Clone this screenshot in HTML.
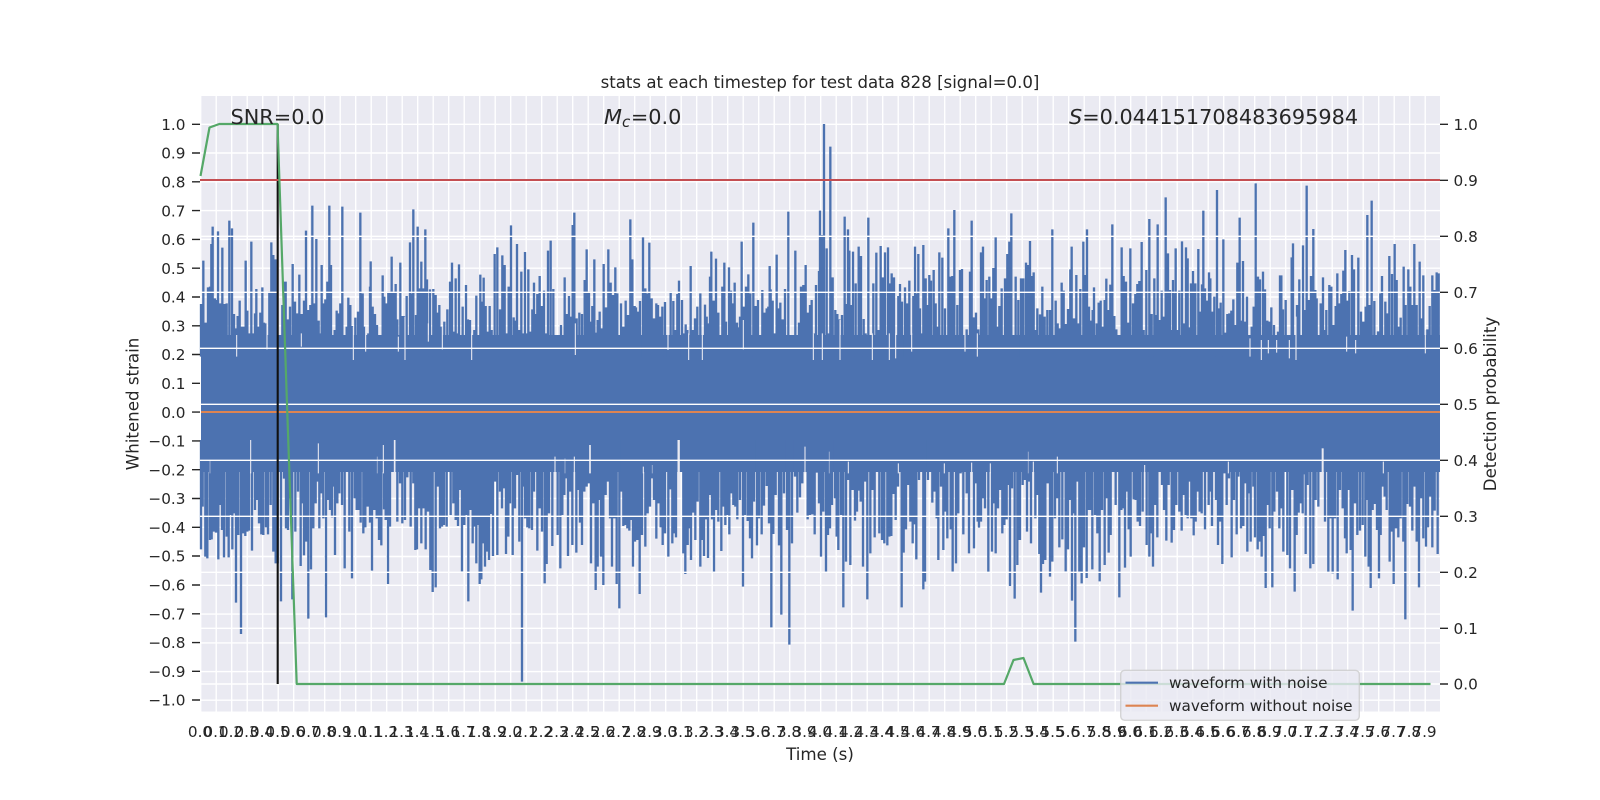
<!DOCTYPE html>
<html><head><meta charset="utf-8"><style>html,body{margin:0;padding:0;background:#fff}svg{display:block}text{font-family:"DejaVu Sans","Liberation Sans",sans-serif;fill:#262626}</style></head><body>
<svg width="1600" height="800" viewBox="0 0 1600 800" xmlns="http://www.w3.org/2000/svg">
<rect x="200" y="96" width="1240" height="615.5" fill="#EAEAF2"/>
<!-- vertical grid -->
<line x1="200" y1="403.75" x2="1440" y2="403.75" stroke="#fff" stroke-width="615.5" stroke-dasharray="1.4 14.1"/>
<!-- left horizontal grid -->
<path stroke="#fff" stroke-width="1.4" fill="none" d="M200 124.3H1440M200 153H1440M200 181.8H1440M200 210.6H1440M200 239.4H1440M200 268.2H1440M200 297H1440M200 325.8H1440M200 354.5H1440M200 383.3H1440M200 412.1H1440M200 440.9H1440M200 469.7H1440M200 498.5H1440M200 527.3H1440M200 556.5H1440M200 585.3H1440M200 614.1H1440M200 642.9H1440M200 671.6H1440M200 700.2H1440"/>
<!-- waveform body -->
<rect x="201" y="335" width="1239" height="137" fill="#4C72B0"/>
<g fill="none" stroke="#4C72B0" stroke-width="7">
<g transform="translate(200 190) scale(.33333)"><path d="M3 342V500M10 212V500M17 398V500M24 292V500M30 290V500M34 162V500M38 110V500M45 325V500M48 330V500M54 124V500M60 340V500M67 173V500M74 342V500M80 340V500M88 92V500M96 115V500M102 372V500M106 415V500M113 378V500M119 332V500M125 410V500M130 410V500M137 212V500M142 362V500M148 430V500M154 155V500M160 430V500M165 370V500M169 297V500M175 410V500M181 368V500M187 292V500M192 398V500M197 400V500M208 305V500M214 157V500M220 195V500M227 208V500M232 305V500M240 455V500M247 345V500M252 275V500M257 275V500M263 388V500M270 350V500M278 222V500M285 335V500M292 370V500M298 254V500M305 372V500M312 332V500M318 122V500M325 360V500M331 345V500M337 47V500M343 340V500M349 147V500M356 392V500M360 430V500M365 225V500M370 340V500M376 328V500M382 275V500M388 47V500M393 225V500M399 450V500M404 420V500M410 362V500M416 370V500M421 340V500M427 50V500M433 460V500M440 410V500M445 323V500M451 345V500M456 408V500M466 383V500M474 365V500M481 68V500M488 310V500M494 410V500M505 430V500M510 290V500M512 214V500M518 350V500M525 372V500M531 405V500M537 435V500M541 450V500M548 256V500M553 320V500M559 340V500M565 305V500M572 305V500M575 200V500M581 305V500M587 282V500M592 388V500M601 218V500M606 378V500M612 378V500M620 318V500M630 157V500M634 310V500M640 58V500M648 375V500M653 110V500M659 295V500M664 215V500M670 295V500M676 118V500M681 268V500M690 298V500M700 297V500M707 315V500M712 368V500M718 345V500M725 410V500M733 395V500M742 358V500M750 275V500M756 218V500M761 425V500M767 265V500M772 430V500M777 223V500M782 445V500M788 350V500M792 445V500M798 285V500M804 388V500M810 390V500M823 420V500M829 317V500M835 485V500M841 254V500M847 335V500M851 263V500M857 348V500M863 425V500M869 348V500M875 420V500M884 192V500M892 172V500M900 358V500M907 196V500M914 225V500M920 430V500M926 290V500M933 106V500M941 382V500M947 392V500M951 162V500M957 420V500M964 245V500M970 430V500M975 186V500M980 430V500M985 238V500M992 425V500M997 358V500M1002 278V500M1008 372V500M1012 312V500M1019 258V500M1026 348V500M1032 302V500M1038 430V500M1044 182V500M1052 152V500M1060 297V500M1066 445V500M1071 460V500M1077 437V500M1083 405V500M1088 450V500M1094 262V500M1100 372V500M1107 318V500M1113 380V500M1118 105V500M1123 68V500M1130 385V500M1138 368V500M1146 372V500M1154 270V500M1160 178V500M1167 305V500M1172 395V500M1177 348V500M1183 208V500M1188 428V500M1193 390V500M1199 365V500M1205 415V500M1211 222V500M1218 352V500M1225 178V500M1232 278V500M1239 315V500M1246 232V500M1252 310V500"/></g>
<g transform="translate(620 190) scale(.33333)"><path d="M3 340V500M10 410V500M17 332V500M24 375V500M31 88V500M37 208V500M44 348V500M48 352V500M54 365V500M60 333V500M69 142V500M76 295V500M82 310V500M88 158V500M95 325V500M102 385V500M109 340V500M114 345V500M120 380V500M127 350V500M135 336V500M144 445V500M152 305V500M160 333V500M167 420V500M172 312V500M177 272V500M186 330V500M192 430V500M197 403V500M202 420V500M212 228V500M219 420V500M225 385V500M232 350V500M241 310V500M248 470V500M255 344V500M260 380V500M265 400V500M270 260V500M274 185V500M281 332V500M288 206V500M295 368V500M300 455V500M307 290V500M313 218V500M318 395V500M321 470V500M327 232V500M333 302V500M338 340V500M344 278V500M351 398V500M355 412V500M360 380V500M365 155V500M372 350V500M378 290V500M385 253V500M391 310V500M400 98V500M407 348V500M414 330V500M420 455V500M427 300V500M434 368V500M440 355V500M445 350V500M449 228V500M452 298V500M458 332V500M464 430V500M470 194V500M476 355V500M481 338V500M488 388V500M495 297V500M500 450V500M505 65V500M512 435V500M518 465V500M524 455V500M526 182V500M532 465V500M537 398V500M543 290V500M550 285V500M557 225V500M564 368V500M570 345V500M575 330V500M581 430V500M588 285V500M597 243V500M600 62V500M606 135V500M612 -198V500M620 175V500M626 430V500M631 -130V500M638 262V500M646 360V500M652 372V500M658 388V500M666 375V500M674 80V500M679 342V500M684 118V500M688 182V500M693 345V500M699 185V500M707 280V500M716 170V500M723 198V500M731 387V500M737 430V500M745 83V500M752 465V500M760 280V500M769 188V500M776 420V500M782 168V500M788 262V500M795 187V500M804 172V500M808 280V500M815 250V500M822 262V500M835 318V500M840 282V500M846 335V500M855 292V500M861 340V500M868 272V500M875 470V500M880 318V500M885 170V500M890 310V500M895 192V500M900 355V500M904 430V500M910 165V500M917 265V500M923 345V500M928 255V500M933 272V500M941 240V500M947 340V500M952 410V500M958 187V500M967 203V500M975 355V500M985 115V500M990 260V500M997 258V500M1003 60V500M1012 345V500M1020 240V500M1026 237V500M1032 435V500M1040 418V500M1050 245V500M1055 92V500M1062 382V500M1068 368V500M1075 418V500M1083 187V500M1089 170V500M1095 325V500M1100 270V500M1108 260V500M1114 325V500M1120 234V500M1127 142V500M1132 410V500M1138 348V500M1145 295V500M1155 265V500M1162 192V500M1168 155V500M1174 70V500M1180 440V500M1187 260V500M1195 330V500"/></g>
<g transform="translate(1020 170) scale(.33333)"><path d="M3 325V560M10 325V560M18 278V560M24 285V560M30 213V560M36 318V560M41 307V560M46 480V560M52 415V560M60 433V560M67 350V560M74 440V560M82 420V560M90 420V560M97 178V560M107 392V560M113 460V560M119 475V560M125 338V560M131 362V560M137 462V560M144 417V560M151 298V560M155 230V560M162 445V560M169 315V560M175 460V560M181 357V560M190 215V560M196 315V560M201 178V560M207 410V560M212 452V560M218 420V560M222 352V560M230 460V560M236 398V560M242 392V560M248 470V560M254 390V560M259 326V560M265 420V560M271 344V560M277 163V560M283 438V560M289 478V560M296 505V560M305 232V560M311 318V560M318 335V560M324 458V560M331 235V560M339 400V560M346 372V560M352 342V560M358 333V560M365 216V560M371 480V560M379 300V560M388 147V560M395 432V560M403 325V560M409 435V560M413 163V560M419 450V560M425 362V560M430 440V560M437 82V560M444 250V560M450 360V560M453 480V560M459 330V560M463 370V560M467 235V560M473 480V560M478 362V560M486 214V560M491 460V560M498 232V560M503 265V560M508 472V560M513 340V560M519 303V560M526 340V560M535 237V560M541 425V560M546 343V560M550 122V560M555 355V560M561 392V560M567 307V560M571 325V560M578 425V560M583 380V560M591 60V560M597 415V560M602 398V560M610 208V560M616 488V560M622 432V560M628 430V560M634 422V560M640 388V560M645 465V560M652 278V560M659 143V560M664 452V560M669 273V560M675 455V560M681 380V560M688 505V560M695 470V560M701 410V560M707 40V560M714 320V560M720 328V560M729 305V560M735 358V560M742 452V560M748 455V560M754 412V560M762 465V560M774 485V560M780 316V560M784 316V560M789 418V560M797 390V560M803 505V560M815 262V560M819 220V560M831 405V560M838 328V560M843 495V560M849 226V560M855 420V560M860 47V560M866 390V560M873 318V560M880 177V560M886 360V560M890 385V560M895 510V560M902 400V560M909 322V560M914 480V560M919 420V560M928 345V560M934 350V560M941 465V560M947 408V560M952 310V560M958 400V560M964 372V560M970 302V560M976 240V560M983 392V560M988 363V560M996 255V560M1002 298V560M1008 510V560M1015 263V560M1023 425V560M1030 455V560M1037 410V560M1042 135V560M1049 405V560M1055 92V560M1063 393V560M1074 484V560M1081 370V560M1086 318V560M1096 395V560M1102 430V560M1108 258V560M1116 312V560M1124 222V560M1130 330V560M1136 470V560M1142 443V560M1151 290V560M1157 405V560M1165 298V560M1171 350V560M1177 405V560M1183 222V560M1190 405V560M1199 275V560M1205 445V560M1210 316V560M1222 478V560M1229 408V560M1237 316V560M1244 360V560M1250 307V560M1256 310V560"/></g>
<g transform="translate(200 440) scale(.33333)"><path d="M3 0V328M8 0V200M16 0V350M22 0V355M30 0V300M35 0V298M42 0V275M48 0V278M55 0V358M62 0V195M66 0V270M72 0V352M80 0V290M86 0V352M91 0V225M97 0V328M102 0V220M108 0V488M115 0V285M123 0V582M130 0V280M136 0V288M142 0V275M147 0V272M156 0V332M165 0V210M170 0V180M177 0V250M184 0V283M190 0V285M198 0V262M204 0V283M212 0V195M220 0V335M227 0V370M233 0V370M243 0V484M252 0V116M258 0V265M264 0V270M270 0V175M277 0V478M286 0V275M294 0V155M302 0V378M306 0V190M312 0V346M318 0V305M325 0V536M333 0V388M340 0V265M347 0V190M352 0V125M358 0V265M364 0V160M370 0V235M378 0V532M384 0V180M390 0V210M396 0V232M400 0V140M405 0V345M412 0V190M418 0V160M426 0V195M434 0V385M440 0V92M448 0V275M456 0V415M464 0V175M470 0V210M476 0V210M482 0V248M490 0V280M496 0V262M503 0V200M510 0V248M516 0V392M523 0V210M530 0V235M537 0V300M544 0V316M552 0V208M557 0V240M564 0V432M570 0V260M577 0V60M592 0V245M600 0V130M607 0V250M615 0V240M622 0V112M632 0V260M640 0V130M646 0V330M651 0V328M658 0V205M664 0V310M670 0V205M677 0V328M684 0V215M691 0V390M698 0V456M707 0V442M713 0V140M720 0V265M726 0V260M732 0V255M740 0V260M747 0V95M752 0V225M760 0V190M767 0V240M774 0V258M780 0V150M786 0V394M793 0V255M799 0V225M805 0V484M812 0V210M818 0V310M824 0V260M829 0V370M833 0V255M839 0V432M844 0V418M850 0V310M855 0V380M860 0V335M867 0V360M873 0V222M879 0V348M885 0V125M892 0V345M900 0V155M906 0V205M912 0V145M918 0V342M925 0V290M930 0V190M938 0V345M945 0V205M951 0V105M958 0V305M966 0V725M970 0V140M975 0V235M982 0V262M988 0V265M996 0V270M1002 0V155M1012 0V332M1019 0V205M1026 0V275M1034 0V430M1040 0V372M1047 0V220M1057 0V318M1065 0V50M1073 0V285M1081 0V385M1087 0V225M1093 0V165M1098 0V115M1104 0V348M1111 0V155M1117 0V315M1123 0V50M1129 0V338M1135 0V150M1140 0V248M1146 0V315M1153 0V155M1160 0V140M1166 0V130M1173 0V370M1180 0V190M1187 0V450M1193 0V380M1197 0V180M1203 0V350M1210 0V435M1217 0V165M1224 0V125M1230 0V235M1236 0V380M1243 0V235M1250 0V432M1258 0V505"/></g>
<g transform="translate(620 440) scale(.33333)"><path d="M5 0V155M10 0V258M16 0V255M22 0V265M28 0V272M33 0V240M39 0V380M45 0V305M52 0V300M59 0V462M66 0V285M76 0V320M83 0V220M90 0V200M96 0V115M102 0V180M109 0V296M116 0V190M122 0V262M128 0V315M135 0V280M145 0V350M152 0V148M157 0V310M163 0V280M168 0V292M182 0V90M190 0V340M196 0V402M203 0V315M208 0V265M213 0V360M220 0V218M226 0V300M233 0V185M241 0V380M246 0V300M252 0V348M258 0V238M264 0V354M270 0V165M276 0V238M282 0V395M288 0V210M295 0V245M304 0V333M310 0V200M316 0V255M322 0V225M328 0V283M335 0V160M340 0V195M346 0V200M352 0V238M360 0V180M369 0V440M375 0V225M383 0V243M390 0V295M396 0V355M402 0V185M411 0V316M417 0V235M425 0V283M432 0V197M440 0V138M447 0V250M454 0V562M460 0V282M467 0V165M477 0V316M484 0V524M492 0V160M501 0V270M508 0V614M516 0V310M525 0V110M532 0V218M540 0V172M547 0V130M553 0V25M563 0V238M570 0V225M577 0V223M584 0V283M590 0V98M597 0V190M603 0V350M610 0V215M618 0V395M624 0V285M630 0V265M636 0V195M645 0V175M650 0V290M655 0V330M663 0V225M670 0V502M678 0V365M684 0V120M691 0V375M698 0V150M705 0V242M711 0V215M717 0V152M722 0V185M729 0V380M735 0V125M742 0V478M751 0V340M757 0V150M764 0V292M770 0V88M778 0V280M786 0V300M793 0V310M802 0V316M808 0V290M814 0V288M820 0V162M827 0V240M834 0V140M845 0V502M851 0V338M858 0V268M865 0V135M871 0V245M878 0V310M885 0V253M889 0V358M897 0V120M910 0V448M915 0V425M924 0V120M930 0V80M937 0V188M943 0V155M950 0V235M955 0V360M963 0V140M970 0V330M976 0V215M982 0V295M992 0V268M998 0V395M1008 0V370M1015 0V220M1022 0V100M1030 0V283M1040 0V160M1047 0V340M1055 0V68M1062 0V325M1067 0V130M1073 0V245M1077 0V263M1083 0V245M1089 0V175M1095 0V205M1105 0V398M1111 0V72M1116 0V335M1121 0V190M1127 0V340M1134 0V205M1140 0V150M1147 0V280M1153 0V255M1160 0V238M1165 0V135M1170 0V438M1176 0V145M1184 0V476M1192 0V375M1197 0V300"/></g>
<g transform="translate(1020 440) scale(.33333)"><path d="M0 0V300M8 0V135M14 0V120M21 0V275M27 0V125M33 0V310M40 0V65M46 0V235M52 0V165M58 0V342M63 0V458M69 0V372M76 0V360M83 0V130M90 0V410M97 0V365M105 0V235M111 0V175M118 0V322M127 0V298M137 0V394M144 0V328M149 0V180M156 0V482M161 0V220M166 0V605M172 0V125M178 0V395M185 0V430M192 0V322M200 0V414M207 0V210M212 0V210M217 0V388M225 0V225M232 0V280M239 0V424M246 0V210M254 0V375M260 0V175M266 0V338M272 0V285M280 0V95M287 0V195M298 0V472M304 0V210M309 0V205M315 0V383M320 0V155M326 0V268M332 0V350M341 0V178M347 0V180M353 0V245M360 0V258M368 0V215M374 0V85M380 0V315M388 0V350M393 0V280M399 0V380M406 0V195M412 0V292M420 0V95M426 0V135M432 0V210M439 0V302M446 0V135M455 0V308M462 0V270M469 0V195M473 0V90M478 0V215M485 0V272M491 0V165M497 0V225M503 0V235M508 0V125M514 0V235M521 0V286M527 0V245M533 0V155M539 0V215M545 0V220M555 0V268M566 0V195M571 0V155M576 0V258M582 0V90M588 0V180M594 0V315M600 0V245M607 0V372M613 0V100M620 0V195M627 0V115M635 0V352M642 0V180M650 0V283M655 0V110M663 0V265M670 0V258M675 0V130M682 0V335M686 0V160M692 0V305M700 0V140M705 0V292M713 0V328M719 0V305M725 0V350M730 0V288M737 0V444M743 0V195M749 0V265M757 0V442M763 0V215M771 0V155M778 0V265M784 0V205M790 0V335M796 0V95M802 0V345M810 0V385M817 0V150M824 0V455M830 0V285M836 0V218M841 0V190M848 0V220M852 0V103M857 0V342M863 0V135M871 0V385M880 0V372M887 0V180M895 0V200M902 0V85M915 0V245M925 0V398M932 0V235M938 0V400M945 0V235M953 0V418M960 0V150M968 0V205M975 0V295M980 0V340M986 0V150M992 0V330M998 0V512M1005 0V190M1012 0V285M1020 0V272M1028 0V255M1036 0V350M1042 0V180M1046 0V380M1052 0V444M1058 0V210M1065 0V192M1071 0V270M1077 0V415M1082 0V285M1088 0V140M1094 0V170M1100 0V210M1109 0V365M1115 0V275M1121 0V432M1128 0V265M1135 0V292M1142 0V235M1150 0V305M1156 0V538M1162 0V192M1170 0V200M1177 0V272M1184 0V140M1190 0V305M1197 0V442M1203 0V175M1210 0V295M1218 0V320M1224 0V262M1230 0V170M1237 0V322M1244 0V212M1253 0V342"/></g>
</g>
<!-- light notches in the solid body -->
<g fill="none" stroke="#EAEAF2" stroke-width="3.2">
<g transform="translate(200 190) scale(.33333)"><path d="M110 435V500M201 400V478M304 430V470M460 410V510M497 410V485M595 440V485M615 380V510M685 400V455M727 410V478M815 430V510M1126 400V495"/></g>
<g transform="translate(620 190) scale(.33333)"><path d="M144 430V480M206 430V510M247 430V510M370 390V478M580 430V510M607 430V510M660 390V510M757 430V510M808 430V510M827 430V505M875 430V485M1035 435V485M1072 430V500"/></g>
<g transform="translate(1020 170) scale(.33333)"><path d="M690 505V560M724 510V570M745 510V550M770 510V548M808 510V565M828 440V570M980 500V545M1007 510V550M1216 480V550"/></g>
<g transform="translate(200 440) scale(.33333)"><path d="M152 0V100M355 10V100M550 15V100M1065 50V100M1123 50V100"/><path stroke-width="5" d="M584 0V100M1170 15V100"/><path stroke-opacity=".45" d="M30 60V100M532 50V100M1095 55V100"/></g>
<g transform="translate(620 440) scale(.33333)"><path stroke-width="7" d="M176 0V100"/><path d="M555 20V100M70 80V100M685 65V100M835 70V100M1055 68V100M1111 70V100M973 70V100"/><path stroke-opacity=".45" d="M97 75V100M628 35V100"/></g>
<g transform="translate(1020 440) scale(.33333)"><path stroke-width="6" d="M908 25V100"/><path d="M40 65V100M112 50V100M625 65V100M1090 65V100M374 75V100"/><path stroke-opacity=".45" d="M25 35V100"/></g>
</g>
<!-- orange -->
<line x1="201" y1="412" x2="1440" y2="412" stroke="#DD8452" stroke-width="2.1"/>
<!-- twin grid -->
<path stroke="#fff" stroke-width="1.4" fill="none" d="M200 180.3H1440M200 236.3H1440M200 292.3H1440M200 348.3H1440M200 404.3H1440M200 460.3H1440M200 516.3H1440M200 572.3H1440M200 628.3H1440M200 684H1440"/>
<!-- black vline -->
<line x1="277.7" y1="124" x2="277.7" y2="684" stroke="#111" stroke-width="2.1"/>
<!-- red -->
<line x1="200" y1="180" x2="1440" y2="180" stroke="#C44E52" stroke-width="2.1"/>
<!-- green -->
<polyline fill="none" stroke="#55A868" stroke-width="2.2" stroke-linejoin="round" points="200.5,176 209.5,127.5 219.3,124 277.5,124 287,404 296.7,684 1004,684 1013.5,660 1023.5,658 1033.6,684 1430.5,684"/>
<!-- ticks -->
<path stroke="#262626" stroke-width="1.4" fill="none" d="M192 124.3H200M192 153H200M192 181.8H200M192 210.6H200M192 239.4H200M192 268.2H200M192 297H200M192 325.8H200M192 354.5H200M192 383.3H200M192 412.1H200M192 440.9H200M192 469.7H200M192 498.5H200M192 527.3H200M192 556H200M192 585H200M192 613.8H200M192 642.6H200M192 671.3H200M192 700H200M1440 124.3H1448M1440 180.3H1448M1440 236.3H1448M1440 292.3H1448M1440 348.3H1448M1440 404.3H1448M1440 460.3H1448M1440 516.3H1448M1440 572.3H1448M1440 628.3H1448M1440 684H1448"/>
<!-- annotations -->
<text x="230.5" y="124" font-size="20.83">SNR=0.0</text>
<text x="604" y="124" font-size="20.83"><tspan font-style="italic">M</tspan><tspan font-style="italic" font-size="15" dy="3">c</tspan><tspan dy="-3" dx="0.6">=0.0</tspan></text>
<text x="1069" y="124" font-size="20.83"><tspan font-style="italic">S</tspan>=0.044151708483695984</text>
<text x="820" y="88" font-size="16.6" text-anchor="middle">stats at each timestep for test data 828 [signal=0.0]</text>
<text x="820" y="760" font-size="16.67" text-anchor="middle">Time (s)</text>
<text transform="translate(138.5 404) rotate(-90)" font-size="16.67" text-anchor="middle">Whitened strain</text>
<text transform="translate(1496 404) rotate(-90)" font-size="16.6" text-anchor="middle">Detection probability</text>
<!-- left tick labels -->
<g font-size="15.28" text-anchor="end">
<text x="185.5" y="129.9">1.0</text><text x="185.5" y="158.7">0.9</text><text x="185.5" y="187.5">0.8</text><text x="185.5" y="216.3">0.7</text><text x="185.5" y="245.1">0.6</text><text x="185.5" y="273.9">0.5</text><text x="185.5" y="302.7">0.4</text><text x="185.5" y="331.4">0.3</text><text x="185.5" y="360.2">0.2</text><text x="185.5" y="389">0.1</text><text x="185.5" y="417.8">0.0</text><text x="185.5" y="446.6">−0.1</text><text x="185.5" y="475.4">−0.2</text><text x="185.5" y="504.2">−0.3</text><text x="185.5" y="532.9">−0.4</text><text x="185.5" y="561.7">−0.5</text><text x="185.5" y="590.5">−0.6</text><text x="185.5" y="619.3">−0.7</text><text x="185.5" y="648.1">−0.8</text><text x="185.5" y="676.9">−0.9</text><text x="185.5" y="705.7">−1.0</text>
</g>
<!-- right tick labels -->
<g font-size="15.28">
<text x="1453.5" y="129.9">1.0</text><text x="1453.5" y="185.9">0.9</text><text x="1453.5" y="241.9">0.8</text><text x="1453.5" y="297.9">0.7</text><text x="1453.5" y="353.9">0.6</text><text x="1453.5" y="409.9">0.5</text><text x="1453.5" y="465.9">0.4</text><text x="1453.5" y="521.9">0.3</text><text x="1453.5" y="577.9">0.2</text><text x="1453.5" y="633.9">0.1</text><text x="1453.5" y="689.7">0.0</text>
</g>
<!-- x tick labels -->
<g font-size="15.28" text-anchor="middle">
<text x="200" y="737">0.0</text><text x="215.5" y="737">0.1</text><text x="231" y="737">0.2</text><text x="246.5" y="737">0.3</text><text x="262" y="737">0.4</text><text x="277.5" y="737">0.5</text><text x="293" y="737">0.6</text><text x="308.5" y="737">0.7</text><text x="324" y="737">0.8</text><text x="339.5" y="737">0.9</text>
<text x="355" y="737">1.0</text><text x="370.5" y="737">1.1</text><text x="386" y="737">1.2</text><text x="401.5" y="737">1.3</text><text x="417" y="737">1.4</text><text x="432.5" y="737">1.5</text><text x="448" y="737">1.6</text><text x="463.5" y="737">1.7</text><text x="479" y="737">1.8</text><text x="494.5" y="737">1.9</text>
<text x="510" y="737">2.0</text><text x="525.5" y="737">2.1</text><text x="541" y="737">2.2</text><text x="556.5" y="737">2.3</text><text x="572" y="737">2.4</text><text x="587.5" y="737">2.5</text><text x="603" y="737">2.6</text><text x="618.5" y="737">2.7</text><text x="634" y="737">2.8</text><text x="649.5" y="737">2.9</text>
<text x="665" y="737">3.0</text><text x="680.5" y="737">3.1</text><text x="696" y="737">3.2</text><text x="711.5" y="737">3.3</text><text x="727" y="737">3.4</text><text x="742.5" y="737">3.5</text><text x="758" y="737">3.6</text><text x="773.5" y="737">3.7</text><text x="789" y="737">3.8</text><text x="804.5" y="737">3.9</text>
<text x="820" y="737">4.0</text><text x="835.5" y="737">4.1</text><text x="851" y="737">4.2</text><text x="866.5" y="737">4.3</text><text x="882" y="737">4.4</text><text x="897.5" y="737">4.5</text><text x="913" y="737">4.6</text><text x="928.5" y="737">4.7</text><text x="944" y="737">4.8</text><text x="959.5" y="737">4.9</text>
<text x="975" y="737">5.0</text><text x="990.5" y="737">5.1</text><text x="1006" y="737">5.2</text><text x="1021.5" y="737">5.3</text><text x="1037" y="737">5.4</text><text x="1052.5" y="737">5.5</text><text x="1068" y="737">5.6</text><text x="1083.5" y="737">5.7</text><text x="1099" y="737">5.8</text><text x="1114.5" y="737">5.9</text>
<text x="1130" y="737">6.0</text><text x="1145.5" y="737">6.1</text><text x="1161" y="737">6.2</text><text x="1176.5" y="737">6.3</text><text x="1192" y="737">6.4</text><text x="1207.5" y="737">6.5</text><text x="1223" y="737">6.6</text><text x="1238.5" y="737">6.7</text><text x="1254" y="737">6.8</text><text x="1269.5" y="737">6.9</text>
<text x="1285" y="737">7.0</text><text x="1300.5" y="737">7.1</text><text x="1316" y="737">7.2</text><text x="1331.5" y="737">7.3</text><text x="1347" y="737">7.4</text><text x="1362.5" y="737">7.5</text><text x="1378" y="737">7.6</text><text x="1393.5" y="737">7.7</text><text x="1409" y="737">7.8</text><text x="1424.5" y="737">7.9</text>
</g>
<!-- legend -->
<rect x="1120.7" y="670.3" width="238.6" height="50" rx="4" fill="#EAEAF2" fill-opacity=".8" stroke="#CCCCCC" stroke-opacity=".8" stroke-width="1.4"/>
<line x1="1125.5" y1="682.7" x2="1158" y2="682.7" stroke="#4C72B0" stroke-width="2.1"/>
<line x1="1125.5" y1="705.7" x2="1158" y2="705.7" stroke="#DD8452" stroke-width="2.1"/>
<text x="1169" y="688" font-size="15.28">waveform with noise</text>
<text x="1169" y="711" font-size="15.28">waveform without noise</text>
</svg>
</body></html>
